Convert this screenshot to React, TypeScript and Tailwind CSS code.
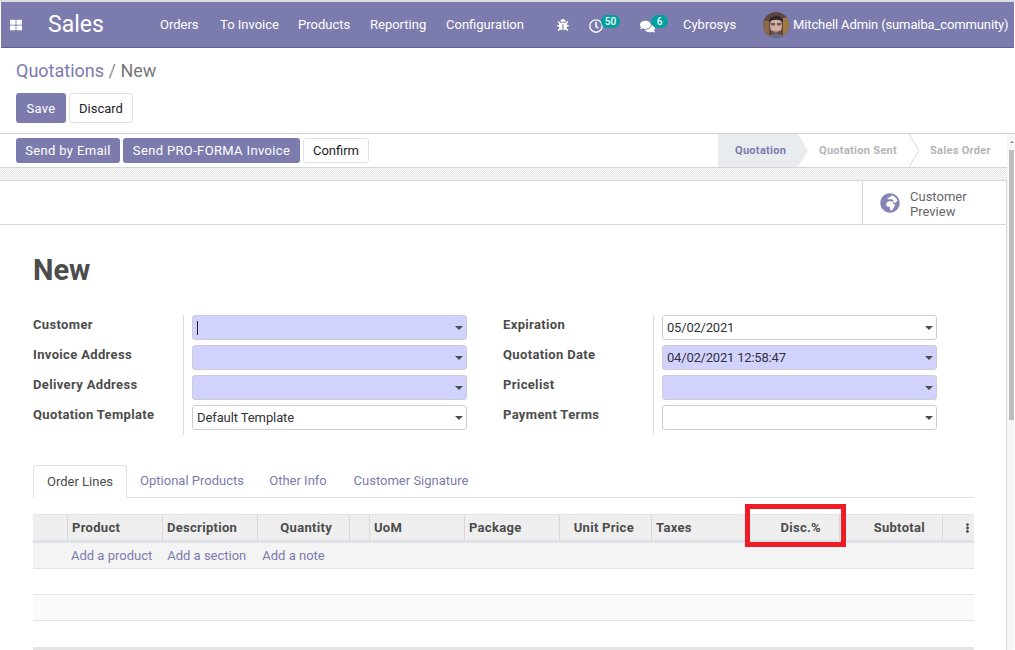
import { FaBug, FaComments, FaEllipsisV, FaGlobeAfrica, FaRegClock, FaThLarge } from 'react-icons/fa';

const navLinks = [
  { label: 'Orders', cls: 'w-[60px]' },
  { label: 'To Invoice', cls: 'w-[78px]' },
  { label: 'Products', cls: 'w-[72px]' },
  { label: 'Reporting', cls: 'w-[76px]' },
  { label: 'Configuration', cls: 'w-[98px]' },
];

function Caret() {
  return <span className="w-0 h-0 border-x-[4px] border-x-transparent border-t-[4px] border-t-[#4c4c4c]" />;
}

function Field({ value, required, cursor, mono }: { value?: string; required?: boolean; cursor?: boolean; mono?: boolean }) {
  return (
    <div
      className={`h-[25px] flex items-center justify-between pl-[4px] pr-[3px] rounded-[3px] border border-[#cdcdd3] text-[13px] text-[#32323a] ${
        required ? 'bg-[#d2d2ff]' : 'bg-white'
      }`}
    >
      <span className={`leading-none ${mono ? 'tracking-[-0.2px]' : 'tracking-[-0.1px]'}`}>
        {cursor ? <span className="block w-px h-[14px] bg-[#222]" /> : value}
      </span>
      <Caret />
    </div>
  );
}

type Row = { label: string; value?: string; required?: boolean; cursor?: boolean; mono?: boolean };

function FormGroup({ rows, labelWidth }: { rows: Row[]; labelWidth: string }) {
  return (
    <div className="flex">
      <div className={`${labelWidth} flex flex-col gap-[5px] shrink-0`}>
        {rows.map((r) => (
          <div key={r.label} className="h-[25px] text-[13px] font-bold tracking-[0.35px] text-[#4c4c4c] leading-[19px] whitespace-nowrap">
            {r.label}
          </div>
        ))}
      </div>
      <div className="w-[275px] border-l border-[#dcdce0] pl-[8px] pb-[5px] box-content flex flex-col gap-[5px]">
        {rows.map((r) => (
          <Field key={r.label} value={r.value} required={r.required} cursor={r.cursor} mono={r.mono} />
        ))}
      </div>
    </div>
  );
}

const columns = [
  { label: '', cls: 'w-[35px] border-r border-[#d8d8dc]' },
  { label: 'Product', cls: 'w-[95px] pl-[4px] border-r border-[#d8d8dc]' },
  { label: 'Description', cls: 'w-[95px] pl-[4px] border-r border-[#d8d8dc]' },
  { label: 'Quantity', cls: 'w-[92px] justify-end pr-[17px] border-r border-[#d8d8dc]' },
  { label: '', cls: 'w-[20px] border-r border-[#d8d8dc]' },
  { label: 'UoM', cls: 'w-[95px] pl-[4px] border-r border-[#d8d8dc]' },
  { label: 'Package', cls: 'w-[95px] pl-[4px] border-r border-[#d8d8dc]' },
  { label: 'Unit Price', cls: 'w-[92px] justify-end pr-[17px] border-r border-[#d8d8dc]' },
  { label: 'Taxes', cls: 'w-[94px] pl-[4px]' },
  { label: 'Disc.%', cls: 'w-[94px] justify-end pr-[18px] border-r border-[#d8d8dc]' },
  { label: 'Subtotal', cls: 'w-[103px] justify-end pr-[17px] border-r border-[#d8d8dc]' },
];

function Avatar() {
  return (
    <svg viewBox="0 0 26 26" className="w-[26px] h-[26px] shrink-0">
      <defs>
        <clipPath id="av">
          <circle cx="13" cy="13" r="13" />
        </clipPath>
      </defs>
      <g clipPath="url(#av)">
        <rect width="26" height="26" fill="#5d4640" />
        <rect x="0" y="9" width="6" height="17" fill="#8a6a4d" />
        <rect x="20" y="6" width="6" height="20" fill="#a07a45" />
        <ellipse cx="13" cy="13.5" rx="6" ry="8" fill="#d2aea2" />
        <path d="M6 10c0-8 14-8 14 0-3-3-11-3-14 0z" fill="#2f2729" />
        <rect x="8" y="11" width="4" height="2.4" fill="#6d5552" />
        <rect x="14" y="11" width="4" height="2.4" fill="#6d5552" />
        <path d="M9 18c2 2 6 2 8 0v2c-2 2-6 2-8 0z" fill="#7b5750" />
        <path d="M3 26c1-3 6-4 10-4s9 1 10 4z" fill="#6b6f86" />
      </g>
    </svg>
  );
}

export default function App() {
  return (
    <div className="relative w-[1015px] h-[650px] overflow-hidden bg-white font-['Roboto',sans-serif] text-[13px] flex flex-col">
      <div className="h-[2px] bg-[#dcdce4] shrink-0" />

      {/* Top nav */}
      <header className="h-[46px] shrink-0 ml-px mr-px bg-[#7c7bad] border-b border-[#5f5e8f] flex items-center text-white">
        <FaThLarge className="w-[12px] h-[12px] ml-[9px]" />
        <span className="ml-[26px] w-[112px] text-[23px] leading-none">Sales</span>
        {navLinks.map((l) => (
          <span key={l.label} className={l.cls}>
            {l.label}
          </span>
        ))}
        <FaBug className="w-[12px] h-[12px] ml-[13px]" />
        <span className="relative ml-[20px] w-[44px] h-[20px] flex items-center">
          <FaRegClock className="w-[14px] h-[14px] mt-[3px]" />
          <span className="absolute left-[12px] top-0 h-[13px] w-[19px] rounded-full bg-[#00a09d] text-[10px] font-medium leading-[13px] text-center">50</span>
        </span>
        <span className="relative ml-[7px] w-[43px] h-[20px] flex items-center">
          <FaComments className="w-[15px] h-[15px] mt-[3px]" />
          <span className="absolute left-[11px] top-0 h-[13px] w-[17px] rounded-full bg-[#00a09d] text-[10px] font-medium leading-[13px] text-center">6</span>
        </span>
        <span className="w-[80px]">Cybrosys</span>
        <Avatar />
        <span className="ml-[4px] whitespace-nowrap tracking-[-0.12px]">Mitchell Admin (sumaiba_community)</span>
      </header>

      {/* Control panel */}
      <div className="h-[85px] shrink-0 pl-[16px] pt-[12px] flex flex-col">
        <div className="text-[18px] leading-[22px] text-[#7c7bad]">
          Quotations <span className="text-[#8f8f8f]">/</span> <span className="text-[#777]">New</span>
        </div>
        <div className="flex gap-[3px] mt-[11px]">
          <button className="h-[30px] w-[50px] pt-[1px] rounded-[3px] bg-[#7c7bad] text-white tracking-[0.3px]">Save</button>
          <button className="h-[30px] w-[64px] pt-[1px] rounded-[3px] bg-white border border-[#dee2e6] text-[#212529]">Discard</button>
        </div>
      </div>

      <div className="flex flex-1 min-h-0 border-t border-[#cfcfd4]">
        <div className="w-[1007px] shrink-0 flex flex-col">
          {/* Status bar */}
          <div className="h-[34px] shrink-0 border-b border-[#d5d5da] flex items-center justify-between pl-[16px]">
            <div className="flex gap-[3px]">
              <button className="h-[25px] w-[104px] rounded-[3px] bg-[#7c7bad] text-white tracking-[0.35px]">Send by Email</button>
              <button className="h-[25px] w-[177px] rounded-[3px] bg-[#7c7bad] text-white tracking-[0.35px]">Send PRO-FORMA Invoice</button>
              <button className="h-[25px] w-[66px] rounded-[3px] bg-white border border-[#dee2e6] text-[#212529]">Confirm</button>
            </div>
            <div className="flex h-full text-[11px] font-bold tracking-[0.3px] text-[#b4b4b8]">
              <div className="relative w-[80px] pl-[17px] pt-[2px] bg-[#e9ecef] text-[#7c7bad] flex items-center">
                Quotation
                <svg viewBox="0 0 10 33" className="absolute left-full top-0 w-[10px] h-[33px]">
                  <path d="M0 0l10 16.5L0 33z" fill="#e9ecef" />
                </svg>
              </div>
              <div className="relative w-[111px] pl-[21px] pt-[2px] flex items-center whitespace-nowrap">
                Quotation Sent
                <svg viewBox="0 0 10 33" className="absolute right-[-10px] top-0 w-[10px] h-[33px]">
                  <path d="M0 0l10 16.5L0 33" fill="none" stroke="#d8d8dc" />
                </svg>
              </div>
              <div className="w-[98px] pl-[21px] pt-[2px] flex items-center whitespace-nowrap">Sales Order</div>
            </div>
          </div>

          {/* Hatched strip */}
          <div className="h-[12px] shrink-0 bg-[repeating-conic-gradient(#e4e4e4_0_25%,#ffffff_0_50%)] bg-[length:2px_2px]" />

          {/* Sheet */}
          <div className="flex-1 min-h-0 border-t border-r border-[#d5d5da]">
            <div className="h-[44px] border-b border-[#d5d5da] flex justify-end">
              <div className="w-[144px] border-l border-[#d5d5da] flex items-center pl-[17px] gap-[10px] text-[#666]">
                <FaGlobeAfrica className="w-[20px] h-[20px] text-[#8584b6]" />
                <span className="leading-[15px] pt-[2px]">
                  Customer
                  <br />
                  Preview
                </span>
              </div>
            </div>

            <div className="pl-[33px] pt-[27px]">
              <h1 className="text-[29px] font-bold leading-[36px] text-[#4c4c4c]">New</h1>

              <div className="flex mt-[27px]">
                <FormGroup
                  labelWidth="w-[150px]"
                  rows={[
                    { label: 'Customer', required: true, cursor: true },
                    { label: 'Invoice Address', required: true },
                    { label: 'Delivery Address', required: true },
                    { label: 'Quotation Template', value: 'Default Template' },
                  ]}
                />
                <div className="w-[36px]" />
                <FormGroup
                  labelWidth="w-[150px]"
                  rows={[
                    { label: 'Expiration', value: '05/02/2021', mono: true },
                    { label: 'Quotation Date', value: '04/02/2021 12:58:47', required: true, mono: true },
                    { label: 'Pricelist', required: true },
                    { label: 'Payment Terms' },
                  ]}
                />
              </div>

              {/* Tabs */}
              <div className="mt-[30px] h-[33px] w-[941px] border-b border-[#dee2e6] flex">
                <div className="h-[33px] w-[94px] border border-b-0 border-[#dee2e6] rounded-t-[3px] bg-white flex items-center justify-center text-[#4c4c4c]">
                  Order Lines
                </div>
                <div className="h-[32px] w-[130px] flex items-center justify-center text-[#7c7bad]">Optional Products</div>
                <div className="h-[32px] w-[84px] -ml-[1px] flex items-center justify-center text-[#7c7bad]">Other Info</div>
                <div className="h-[32px] w-[142px] flex items-center justify-center text-[#7c7bad]">Customer Signature</div>
              </div>

              {/* Order lines table */}
              <div className="mt-[16px] w-[941px]">
                <div className="h-[29px] flex border-b-[3px] border-[#dee2e6] bg-[repeating-conic-gradient(#ececec_0_25%,#f1f1f1_0_50%)] bg-[length:2px_2px] font-bold tracking-[0.3px] text-[#4c4c4c] border-t border-t-[#e4e4e4]">
                  {columns.map((c, i) => (
                    <div key={i} className={`${c.cls} flex items-center`}>
                      {c.label}
                    </div>
                  ))}
                  <div className="flex-1 flex items-center justify-end pr-[2px]">
                    <FaEllipsisV className="w-[9px] h-[10px]" />
                  </div>
                </div>
                <div className="h-[26px] bg-[#f4f4f5] border-b border-[#dee2e6] text-[#7c7bad] flex items-center">
                  <span className="ml-[38px]">Add a product</span>
                  <span className="ml-[15px]">Add a section</span>
                  <span className="ml-[16px]">Add a note</span>
                </div>
                <div className="h-[26px] border-b border-[#e4e4e6]" />
                <div className="h-[26px] bg-[#fafafa] border-b border-[#e4e4e6]" />
                <div className="h-[26px] border-b-[4px] border-[#e4e4e6] box-content" />
              </div>
            </div>
          </div>
        </div>

        {/* Scrollbar */}
        <div className="flex-1 mr-px pl-[2px] flex flex-col bg-[repeating-conic-gradient(#eeeeee_0_25%,#ffffff_0_50%)] bg-[length:2px_2px]">
          <div className="h-[16px] flex items-center justify-center">
            <span className="w-0 h-0 border-x-[2px] border-x-transparent border-b-[2px] border-b-[#8a8a8a]" />
          </div>
          <div className="h-[270px] bg-[#bdbdbd]" />
        </div>
      </div>

      {/* Red highlight drawn over the Disc.% column */}
      <div className="absolute left-[745px] top-[504px] w-[101px] h-[43px] border-[5px] border-[#ee1c25] pointer-events-none" />
    </div>
  );
}
